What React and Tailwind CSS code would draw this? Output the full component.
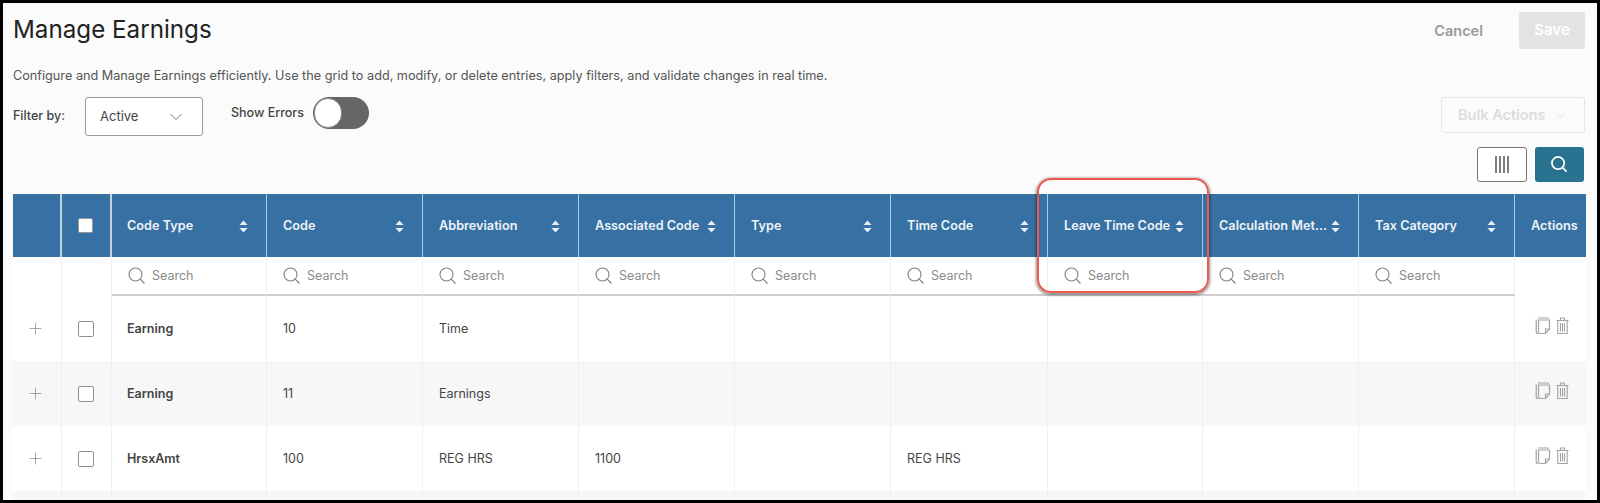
import React from "react";
import { ChevronDown, Plus } from "lucide-react";

const columns = [
  "Code Type",
  "Code",
  "Abbreviation",
  "Associated Code",
  "Type",
  "Time Code",
  "Leave Time Code",
  "Calculation Met...",
  "Tax Category",
];

const rows = [
  { cells: ["Earning", "10", "Time", "", "", "", "", "", ""] },
  { cells: ["Earning", "11", "Earnings", "", "", "", "", "", ""] },
  { cells: ["HrsxAmt", "100", "REG HRS", "1100", "", "REG HRS", "", "", ""] },
  { cells: ["", "", "", "", "", "", "", "", ""] },
];

const gridCols =
  "grid grid-cols-[49px_50px_155px_156px_156px_156px_156px_157px_155px_156px_156px_71px]";

function SortIcon() {
  return (
    <svg width="9" height="13" viewBox="0 0 9 13" className="shrink-0">
      <path d="M4.5 0.5 L8.5 5 H0.5 Z" fill="#e8eef4" />
      <path d="M4.5 12.5 L8.5 8 H0.5 Z" fill="#e8eef4" />
    </svg>
  );
}

function SearchGlyph({ color = "#808080", width = 1.1, size = 18 }) {
  return (
    <svg width={size} height={size} viewBox="0 0 18 18" fill="none" stroke={color} strokeWidth={width} className="shrink-0">
      <circle cx="7.5" cy="7.5" r="6.5" />
      <path d="M12.2 12.2 L16.5 16.5" />
    </svg>
  );
}

function CopyIcon() {
  return (
    <svg width="16" height="18" viewBox="0 0 16 18" fill="none" stroke="#a3a3a3" strokeWidth="1.2">
      <path d="M3 1 H13 V2" />
      <path d="M1.2 2.5 V14.5 Q1.2 16.5 3 16.5" />
      <path d="M3.5 3 H14.5 V12 L10.5 16.5 H5 Q3.5 16.5 3.5 15 Z" />
      <path d="M14.5 12 H10.5 V16.5" />
    </svg>
  );
}

function TrashIcon() {
  return (
    <svg width="13" height="18" viewBox="0 0 13 18" fill="none" stroke="#a3a3a3" strokeWidth="1.1">
      <path d="M0.5 3.5 H12.5" />
      <path d="M4.5 3.5 V1 H8.5 V3.5" />
      <path d="M1.8 3.5 V16.5 H11.2 V3.5" />
      <path d="M4.5 6 V14.5 M6.5 6 V14.5 M8.5 6 V14.5" />
    </svg>
  );
}

function App() {
  return (
    <div className="relative w-[1600px] h-[503px] overflow-hidden border-[3px] border-black bg-[#fbfbfb] font-['Inter',sans-serif] text-[#444]">
      <div className="px-[10px] pt-[9px] w-[1593px]">
        <div className="flex items-center justify-between h-[37px] pr-px">
          <h1 className="text-[24.2px] leading-none text-[#222]">Manage Earnings</h1>
          <div className="flex items-center">
            <span className="text-[14.5px] font-semibold text-[#9a9a9a] mr-[36px]">Cancel</span>
            <button className="w-[66px] h-[37px] rounded-[3px] bg-[#e3e3e3] text-white text-[15px] font-semibold">Save</button>
          </div>
        </div>

        <p className="mt-[19px] text-[12.68px] leading-[16px] text-[#555]">
          Configure and Manage Earnings efficiently. Use the grid to add, modify, or delete entries, apply filters, and validate changes in real time.
        </p>

        <div className="mt-[13px] flex items-start justify-between h-[39px] pr-px">
          <div className="flex items-start">
            <span className="w-[72px] text-[12.5px] font-medium leading-[37px] text-[#444]">Filter by:</span>
            <div className="w-[118px] h-[39px] flex items-center justify-between pl-[14px] pr-[16px] border border-[#9c9c9c] rounded-[3px] bg-white text-[13px] text-[#444]">
              Active
              <ChevronDown size={20} strokeWidth={1.1} color="#666" />
            </div>
            <span className="ml-[28px] w-[74px] text-[12.5px] font-medium leading-[31px] whitespace-nowrap text-[#444]">Show Errors</span>
            <div className="ml-[8px] w-[56px] h-[32px] rounded-full bg-[#666] flex items-center">
              <div className="w-[28px] h-[30px] rounded-full bg-white border border-[#888] ml-px" />
            </div>
          </div>
          <div className="w-[144px] h-[36px] flex items-center justify-between pl-[16px] pr-[16px] border border-[#e6e6e6] rounded-[3px] text-[14.5px] font-semibold text-[#dcdcdc]">
            Bulk Actions
            <ChevronDown size={15} strokeWidth={1.2} color="#dcdcdc" />
          </div>
        </div>

        <div className="mt-[11px] flex justify-end gap-[8px] pr-[2px]">
          <button className="w-[50px] h-[35px] flex items-center justify-center border border-[#777] rounded-[3px] bg-white">
            <svg width="14" height="17" viewBox="0 0 14 17" stroke="#707070" strokeWidth="1.8">
              <path d="M1 0 V17 M5 0 V17 M9 0 V17 M13 0 V17" />
            </svg>
          </button>
          <button className="w-[49px] h-[35px] flex items-center justify-center rounded-[3px] bg-[#2a7390]">
            <SearchGlyph color="#fff" width={1.8} size={17} />
          </button>
        </div>

        <div className="mt-[12px]">
          <div className={`${gridCols} h-[63px] bg-[#3771a3] text-[12.7px] font-semibold text-[#eef3f7]`}>
            <div className="border-r-2 border-[#c4d2de]" />
            <div className="border-r-2 border-[#c4d2de] flex items-center justify-center pr-px">
              <div className="w-[15px] h-[15px] rounded-[2px] bg-white border border-[#999]" />
            </div>
            {columns.map((name, j) => (
              <div key={name} className={`flex items-center justify-between gap-1 pr-[18px] pt-px border-r border-[#a9cce6] whitespace-nowrap ${j === 0 ? "pl-[15px]" : "pl-[16px]"}`}>
                {name}
                <SortIcon />
              </div>
            ))}
            <div className="flex items-center pl-[16px] pt-px">Actions</div>
          </div>

          <div className={`${gridCols} h-[39px] bg-white`}>
            <div className="border-r border-[#f0f0f0]" />
            <div className="border-r border-[#f0f0f0]" />
            {columns.map((name) => (
              <div key={name} className="flex items-center gap-[6px] pl-[16px] pt-px border-r border-b-2 border-r-[#f0f0f0] border-b-[#cfcfcf] text-[12.5px] text-[#8a8a8a]">
                <SearchGlyph />
                Search
              </div>
            ))}
            <div />
          </div>

          {rows.map((row, i) => (
            <div key={i} className={`${gridCols} h-[65px] text-[12.5px] text-[#444] ${i % 2 === 1 ? "bg-[#f7f7f7]" : "bg-white"}`}>
              <div className="flex items-center justify-center pr-[3px] border-r border-[#f0f0f0]">
                <Plus size={19} strokeWidth={0.8} color="#777" />
              </div>
              <div className="flex items-center justify-center pr-px border-r border-[#f0f0f0]">
                <div className="w-[16px] h-[16px] rounded-[2px] bg-white border border-[#8f8f8f]" />
              </div>
              {row.cells.map((cell, j) => (
                <div key={j} className={`flex items-center pt-[2px] border-r border-[#f0f0f0] ${j === 0 ? "pl-[15px] font-semibold" : "pl-[16px]"}`}>
                  {cell}
                </div>
              ))}
              <div className="flex items-center justify-center gap-[5px] pl-[3px] -translate-y-[3px]">
                <CopyIcon />
                <TrashIcon />
              </div>
            </div>
          ))}
        </div>
      </div>

      {/* callout around the Leave Time Code column */}
      <div className="absolute left-[1034px] top-[175px] w-[172px] h-[115px] rounded-[14px] border-2 border-[#ee5a50] shadow-[0_1px_3px_1px_rgba(0,0,0,0.45)]" />
    </div>
  );
}

export default App;
